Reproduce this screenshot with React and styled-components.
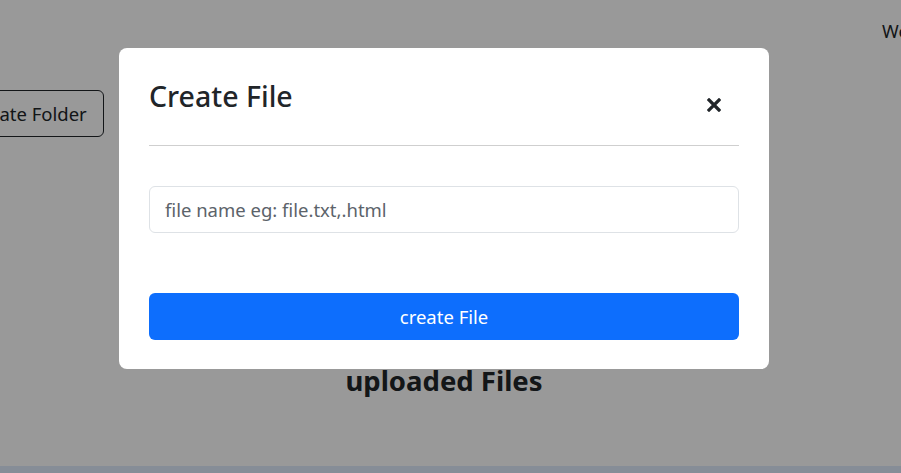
import React from 'react';
import styled, { createGlobalStyle } from 'styled-components';

const GlobalStyle = createGlobalStyle`
  html, body {
    margin: 0;
    padding: 0;
    overflow: hidden;
  }
  body {
    font-family: 'Noto Sans', 'Open Sans', sans-serif;
    color: #212529;
    background: #fff;
  }
`;

const Page = styled.div`
  width: 888px;
  height: 100vh;
  display: flex;
  flex-direction: column;
`;

const TopBar = styled.div`
  height: 60px;
  display: flex;
  align-items: center;
`;

const Greeting = styled.span`
  margin-left: 882px;
  margin-top: 2px;
  white-space: nowrap;
  font-size: 18px;
`;

const Toolbar = styled.div`
  margin-top: 30px;
  display: flex;
`;

const OutlineButton = styled.button`
  margin-left: -47px;
  height: 47px;
  padding: 0 16px;
  font-family: inherit;
  font-size: 18.5px;
  color: #212529;
  background: transparent;
  border: 1px solid #212529;
  border-radius: 6px;
`;

const Heading = styled.h2`
  margin: 228px 0 0;
  text-align: center;
  font-size: 27.5px;
  font-weight: 700;
  line-height: 32px;
`;

const Footer = styled.div`
  margin-top: auto;
  height: 7px;
  width: 901px;
  background: #dfebfc;
`;

const Backdrop = styled.div`
  position: fixed;
  inset: 0;
  background: rgba(0, 0, 0, 0.4);
  display: flex;
  justify-content: center;
  align-items: flex-start;
  padding: 48px 13px 0 0;
`;

const Modal = styled.div`
  width: 650px;
  box-sizing: border-box;
  background: #fff;
  border-radius: 8px;
  padding: 30px 30px 29px;
  display: flex;
  flex-direction: column;
`;

const Header = styled.div`
  display: flex;
  justify-content: space-between;
  align-items: flex-start;
  padding-bottom: 31px;
  border-bottom: 1px solid #cfcfcf;
`;

const Title = styled.h5`
  margin: 0;
  font-size: 28.5px;
  font-weight: 500;
  line-height: 36px;
`;

const CloseButton = styled.button`
  margin: 20px 18px 0 0;
  width: 14px;
  height: 14px;
  padding: 0;
  border: 0;
  background: transparent;
  display: flex;
  color: #212529;
`;

const Input = styled.input`
  margin-top: 40px;
  height: 47px;
  box-sizing: border-box;
  padding: 0 15px;
  font-family: inherit;
  font-size: 18.5px;
  color: #212529;
  border: 1px solid #dee2e6;
  border-radius: 6px;
  outline: none;
  &::placeholder {
    color: #5c636a;
  }
`;

const PrimaryButton = styled.button`
  margin-top: 60px;
  height: 47px;
  font-family: inherit;
  font-size: 18.5px;
  color: #fff;
  background: #0d6efd;
  border: 0;
  border-radius: 6px;
`;

export default function App() {
  return (
    <>
      <GlobalStyle />
      <Page>
        <TopBar>
          <Greeting>Welcome</Greeting>
        </TopBar>
        <Toolbar>
          <OutlineButton>Create Folder</OutlineButton>
        </Toolbar>
        <Heading>uploaded Files</Heading>
        <Footer />
      </Page>
      <Backdrop>
        <Modal>
          <Header>
            <Title>Create File</Title>
            <CloseButton aria-label="close">
              <svg width="14" height="14" viewBox="0 0 14 14">
                <path d="M2 2L12 12M12 2L2 12" stroke="currentColor" strokeWidth="3.2" strokeLinecap="square" />
              </svg>
            </CloseButton>
          </Header>
          <Input placeholder="file name eg: file.txt,.html" />
          <PrimaryButton>create File</PrimaryButton>
        </Modal>
      </Backdrop>
    </>
  );
}
